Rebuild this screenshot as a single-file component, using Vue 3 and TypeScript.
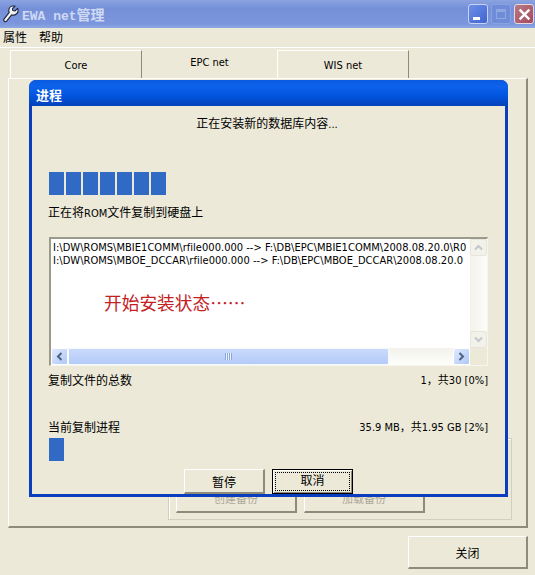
<template>
  <div class="window">
    <div class="titlebar">
      <svg class="app-icon" viewBox="0 0 18 20">
        <path d="M11.500 1C8.700 1 6.500 3.200 6.500 6c0 .8.200 1.500.5 2.200L1.300 15.500c-.7.900-.6 2 .2 2.700.8.700 1.900.6 2.600-.2L9.700 11c.6.200 1.200.3 1.800.3 3 0 5.500-2.400 5.500-5.300 0-.9-.2-1.700-.6-2.400l-3 3-2.300-.5-.5-2.200 3-2.800C13 1.200 12.300 1 11.500 1z" fill="#f6f4ea" stroke="#1d2748" stroke-width="1.300" stroke-linejoin="round" />
      </svg>
      <span class="app-title">EWA net<span class="app-title-cjk">管理</span></span>
      <div class="win-buttons">
        <span class="win-btn min"><i></i></span>
        <span class="win-btn max"><i></i></span>
        <span class="win-btn close">
          <svg viewBox="0 0 12 12"><path d="M1.500 1.500l9 9M10.500 1.500l-9 9" stroke="#fff" stroke-width="2.200" /></svg>
        </span>
      </div>
    </div>
    <div class="menubar">
      <span>属性</span>
      <span>帮助</span>
    </div>
    <div class="tabs">
      <div v-for="tab in tabs" :key="tab" class="tab" :class="{ active: tab === 'EPC net' }">{{ tab }}</div>
    </div>
    <div class="panel">
      <div class="groupbox">
        <button class="xp-btn disabled">创建备份</button>
        <button class="xp-btn disabled">加载备份</button>
      </div>
    </div>
    <div class="footer">
      <button class="xp-btn close-btn">关闭</button>
    </div>

    <div class="dialog">
      <div class="dialog-title">进程</div>
      <div class="dialog-body">
        <p class="status">正在安装新的数据库内容<span class="latin">...</span></p>
        <div class="blocks">
          <span v-for="n in 7" :key="n" class="block"></span>
        </div>
        <p class="copy-label">正在将<span class="latin">ROM</span>文件复制到硬盘上</p>
        <div class="listbox">
          <div class="list-row">
            <div class="list-text">
              <div v-for="line in lines" :key="line" class="line">{{ line }}</div>
              <div class="red-note">开始安装状态……</div>
            </div>
            <div class="vscroll">
              <span class="sb-btn faded">
                <svg viewBox="0 0 9 6"><path d="M1 5l3.500-3.500L8 5" fill="none" stroke="#c4c8cc" stroke-width="2" /></svg>
              </span>
              <span class="sb-btn faded">
                <svg viewBox="0 0 9 6"><path d="M1 1l3.500 3.500L8 1" fill="none" stroke="#c4c8cc" stroke-width="2" /></svg>
              </span>
            </div>
          </div>
          <div class="hscroll">
            <span class="sb-btn">
              <svg viewBox="0 0 6 9"><path d="M5 1L1.500 4.500 5 8" fill="none" stroke="#4d6185" stroke-width="2" /></svg>
            </span>
            <div class="thumb"><span class="grip"></span></div>
            <span class="sb-btn">
              <svg viewBox="0 0 6 9"><path d="M1 1l3.500 3.500L1 8" fill="none" stroke="#4d6185" stroke-width="2" /></svg>
            </span>
            <span class="corner"></span>
          </div>
        </div>
        <div class="info-row first">
          <span class="info-label">复制文件的总数</span>
          <span>1，共30 [0%]</span>
        </div>
        <div class="info-row second">
          <span class="info-label">当前复制进程</span>
          <span>35.9 MB，共1.95 GB [2%]</span>
        </div>
        <div class="blocks small"><span class="block"></span></div>
        <div class="actions">
          <button class="xp-btn action">暂停</button>
          <button class="xp-btn action focused"><span>取消</span></button>
        </div>
      </div>
    </div>
  </div>
</template>

<script setup lang="ts">
const tabs: string[] = ['Core', 'EPC net', 'WIS net']

const lines: string[] = [
  'I:\\DW\\ROMS\\MBIE1COMM\\rfile000.000 --> F:\\DB\\EPC\\MBIE1COMM\\2008.08.20.0\\R0',
  'I:\\DW\\ROMS\\MBOE_DCCAR\\rfile000.000 --> F:\\DB\\EPC\\MBOE_DCCAR\\2008.08.20.0',
]
</script>

<style>
html,
body {
  margin: 0;
  background: #ece9d8;
}
</style>

<style scoped>
.window {
  position: relative;
  width: 535px;
  height: 575px;
  overflow: hidden;
  background: #ece9d8;
  color: #000;
  font-family: "DejaVu Sans", "Noto Sans CJK SC", sans-serif;
  font-stretch: condensed;
  font-size: 11px;
}

.titlebar {
  display: flex;
  align-items: center;
  height: 28px;
  box-sizing: border-box;
  padding: 0 1px 0 3px;
  background-image: linear-gradient(180deg, #8ba3e0 0%, #7590d8 30%, #7b96dc 85%, #8ea8e2 100%);
}

.app-icon {
  width: 16px;
  height: 18px;
  margin-right: 3px;
}

.app-title {
  color: #cfd9f3;
  font-family: "Liberation Mono", "Noto Sans CJK SC", monospace;
  font-size: 13px;
  font-weight: 700;
}

.app-title-cjk {
  font-family: "Noto Sans CJK SC", sans-serif;
  font-size: 14px;
}

.win-buttons {
  display: flex;
  gap: 3px;
  margin-left: auto;
}

.win-btn {
  display: flex;
  align-items: center;
  justify-content: center;
  width: 20px;
  height: 20px;
  box-sizing: border-box;
  border: 1px solid #c6d3f2;
  border-radius: 3px;
  background: #4b6fd8;
}

.win-btn.min {
  align-items: flex-end;
  justify-content: flex-start;
  padding: 0 0 3px 4px;
  background: linear-gradient(135deg, #6f8fe6, #3f64d2);
}

.win-btn.min i {
  display: block;
  width: 7px;
  height: 3px;
  background: #fff;
}

.win-btn.max {
  border-color: #8ba2e0;
  background: #6f8cd9;
}

.win-btn.max i {
  display: block;
  width: 10px;
  height: 10px;
  box-sizing: border-box;
  border: 1px solid #90a7e2;
  border-top-width: 3px;
}

.win-btn.close {
  background: linear-gradient(135deg, #b87a86, #a5495a);
  border-color: #e8d8dc;
}

.win-btn.close svg {
  width: 13px;
  height: 13px;
}

.menubar {
  display: flex;
  gap: 12px;
  align-items: center;
  padding: 0 3px 2px;
  box-sizing: border-box;
  font-size: 12px;
  border-bottom: 1px solid #fff;
  height: 20px;
}

.tabs {
  display: flex;
  height: 30px;
  padding-left: 10px;
  box-sizing: border-box;
  align-items: flex-end;
}

.tab {
  display: flex;
  align-items: center;
  justify-content: center;
  height: 28px;
  width: 132px;
  padding-top: 2px;
  box-sizing: border-box;
  border-top: 1px solid #fff;
  border-left: 1px solid #fff;
  border-right: 1px solid #8e8b7a;
}

.tab.active {
  width: 135px;
  height: 30px;
  padding: 0 0 2px;
  border: none;
}

.panel {
  position: relative;
  height: 450px;
  margin: 0 7px 0 8px;
  box-sizing: border-box;
  border-top: 1px solid #fff;
  border-left: 1px solid #fff;
  border-right: 2px solid #8e8b7a;
  border-bottom: 2px solid #8e8b7a;
}

.groupbox {
  position: absolute;
  left: 159px;
  right: 14px;
  bottom: 6px;
  height: 82px;
  display: flex;
  align-items: flex-end;
  gap: 7px;
  padding: 0 7px 6px;
  box-sizing: border-box;
  border: 1px solid #d0d0bf;
  box-shadow: inset 1px 1px 0 #fff;
}

.xp-btn {
  font: inherit;
  color: #000;
  padding: 0;
  box-sizing: border-box;
  background: #ece9d8;
  border: 0;
  border-top: 1px solid #fff;
  border-left: 1px solid #fff;
  border-right: 2px solid #8e8b7a;
  border-bottom: 2px solid #8e8b7a;
}

.xp-btn.disabled {
  width: 121px;
  height: 30px;
  color: #aca899;
}

.footer {
  display: flex;
  justify-content: flex-end;
  padding: 8px 7px 0 0;
}

.close-btn {
  width: 120px;
  height: 33px;
  font-size: 12px;
}

.dialog {
  position: absolute;
  left: 29px;
  top: 80px;
  width: 479px;
  height: 417px;
  display: flex;
  flex-direction: column;
  box-sizing: border-box;
  border-radius: 7px 7px 0 0;
  background: #0b3dbf;
}

.dialog-title {
  height: 29px;
  padding: 2px 0 0 7px;
  box-sizing: border-box;
  display: flex;
  align-items: center;
  border-radius: 7px 7px 0 0;
  color: #fff;
  font-size: 13px;
  font-weight: 700;
  background: linear-gradient(180deg, #0a5ae0 0%, #0c62ea 25%, #0255e0 60%, #0342b8 100%);
}

.dialog-body {
  flex: 1;
  margin: 0 3px 3px 3px;
  padding: 0 17px;
  background: #ece9d8;
  display: flex;
  flex-direction: column;
}

.latin {
  font-size: 11px;
}

.status {
  margin: 10px 0 0;
  padding-right: 3px;
  text-align: center;
  line-height: 16px;
  font-size: 12px;
}

.blocks {
  display: flex;
  gap: 2px;
  height: 23px;
  margin-top: 39px;
}

.block {
  width: 15px;
  height: 23px;
  background: #316ac5;
}

.copy-label {
  margin: 10px 0 0 -1px;
  line-height: 16px;
  font-size: 12px;
}

.listbox {
  height: 129px;
  margin-top: 15px;
  display: flex;
  flex-direction: column;
  box-sizing: border-box;
  background: #fff;
  border-top: 2px solid #9c9a8b;
  border-left: 2px solid #9c9a8b;
  border-right: 1px solid #f6f5ee;
  border-bottom: 1px solid #f6f5ee;
}

.list-row {
  flex: 1;
  display: flex;
  min-height: 0;
}

.list-text {
  position: relative;
  flex: 1;
  padding: 2px 0 0 2px;
  overflow: hidden;
}

.line {
  white-space: nowrap;
  line-height: 13px;
  letter-spacing: 0.03px;
}

.red-note {
  position: absolute;
  left: 53px;
  top: 52px;
  color: #c4201f;
  font-family: "Noto Sans CJK SC", sans-serif;
  font-size: 17.700px;
  line-height: 22px;
  white-space: nowrap;
}

.vscroll {
  width: 17px;
  display: flex;
  flex-direction: column;
  justify-content: space-between;
  background: linear-gradient(90deg, #f3f2ec, #fdfdfa);
}

.hscroll {
  display: flex;
  height: 17px;
  background: linear-gradient(180deg, #f3f2ec, #fefefb);
}

.sb-btn {
  display: flex;
  align-items: center;
  justify-content: center;
  width: 17px;
  height: 17px;
  flex: none;
  box-sizing: border-box;
  border: 1px solid #fff;
  border-radius: 2px;
  background: linear-gradient(135deg, #e1eafe, #aec8f7);
}

.sb-btn svg {
  width: 9px;
  height: 9px;
}

.sb-btn.faded {
  background: #f2f1ea;
  border-color: #e8e6da;
}

.thumb {
  flex: none;
  width: 321px;
  display: flex;
  align-items: center;
  justify-content: center;
  box-sizing: border-box;
  border: 1px solid #f5f8ff;
  border-radius: 2px;
  background: linear-gradient(180deg, #c9dafb, #b4cbf8);
}

.grip {
  display: block;
  width: 7px;
  height: 7px;
  background: repeating-linear-gradient(90deg, #8aa5d9 0 1px, #eef3fe 1px 2px);
}

.hscroll .sb-btn:nth-of-type(2) {
  margin-left: auto;
}

.corner {
  width: 17px;
  flex: none;
  background: #ece9d8;
}

.info-row {
  display: flex;
  justify-content: space-between;
  align-items: center;
  line-height: 16px;
}

.info-label {
  margin-left: -1px;
  font-size: 12px;
}

.info-row.first {
  margin-top: 7px;
}

.info-row.second {
  margin-top: 31px;
}

.blocks.small {
  margin-top: 2px;
}

.actions {
  display: flex;
  gap: 7px;
  margin-top: 8px;
  padding-left: 135px;
}

.action {
  width: 81px;
  height: 25px;
  font-size: 12px;
}

.focused {
  padding: 2px;
  border: 1px solid #000;
  box-shadow: inset 1px 1px 0 #fff, inset -1px -1px 0 #8e8b7a;
}

.focused span {
  display: block;
  height: 100%;
  line-height: 18px;
  outline: 1px dotted #000;
  outline-offset: -1px;
}
</style>
